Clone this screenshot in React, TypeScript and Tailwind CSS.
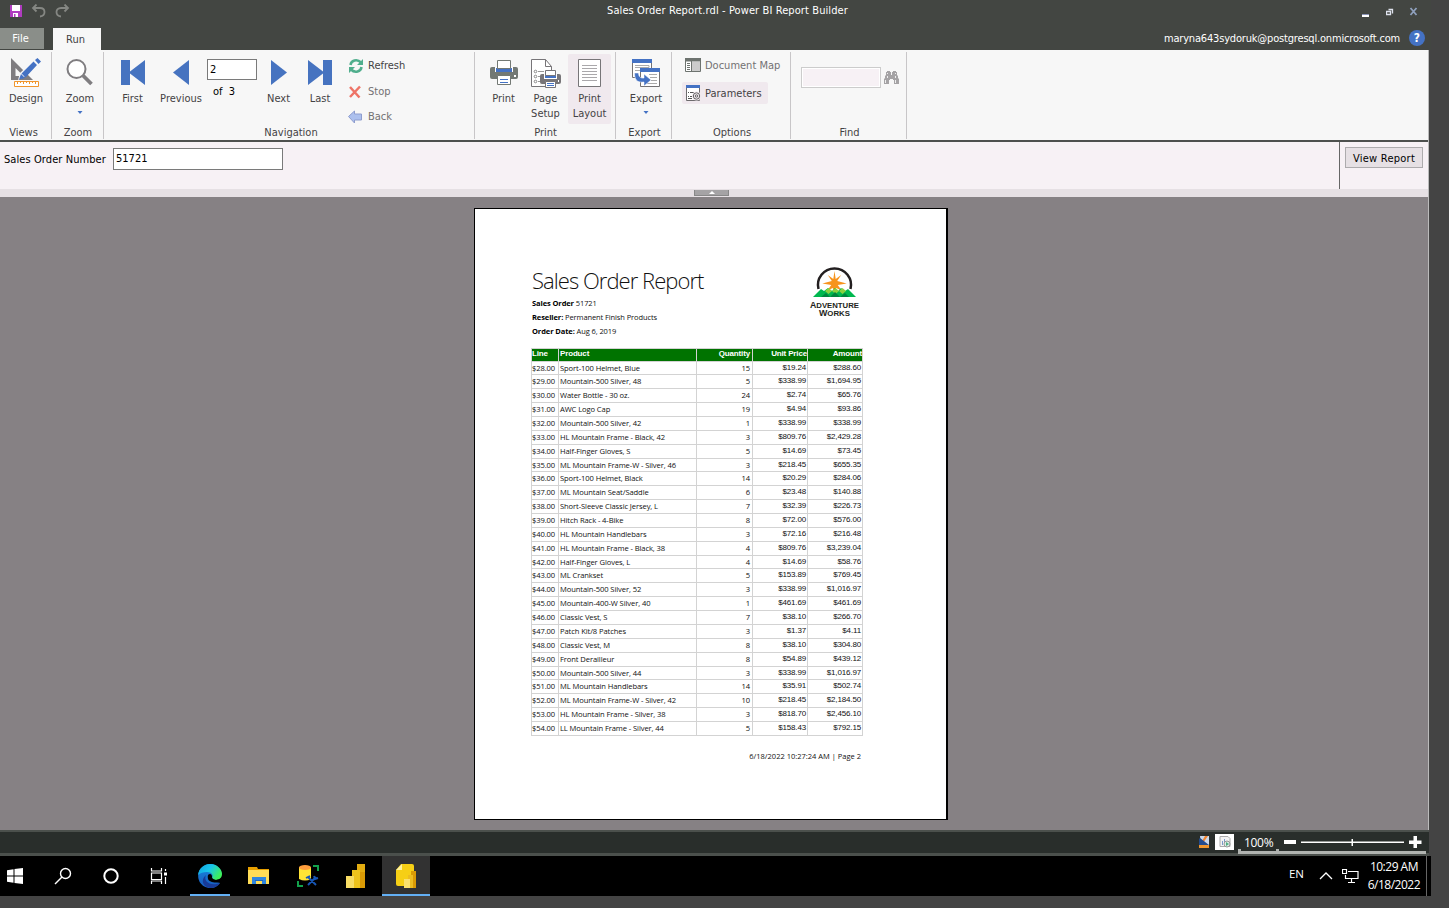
import React from "react";

const ui = "font-['DejaVu_Sans_Condensed','DejaVu_Sans',sans-serif] [font-stretch:condensed]";
const segoe = "font-['Open_Sans','Noto_Sans',sans-serif] [font-stretch:normal]";
const arial = "font-['Liberation_Sans',Arial,sans-serif] [font-stretch:normal]";

const rows: [string, string, string, string, string][] = [
  ["$28.00", "Sport-100 Helmet, Blue", "15", "$19.24", "$288.60"],
  ["$29.00", "Mountain-500 Silver, 48", "5", "$338.99", "$1,694.95"],
  ["$30.00", "Water Bottle - 30 oz.", "24", "$2.74", "$65.76"],
  ["$31.00", "AWC Logo Cap", "19", "$4.94", "$93.86"],
  ["$32.00", "Mountain-500 Silver, 42", "1", "$338.99", "$338.99"],
  ["$33.00", "HL Mountain Frame - Black, 42", "3", "$809.76", "$2,429.28"],
  ["$34.00", "Half-Finger Gloves, S", "5", "$14.69", "$73.45"],
  ["$35.00", "ML Mountain Frame-W - Silver, 46", "3", "$218.45", "$655.35"],
  ["$36.00", "Sport-100 Helmet, Black", "14", "$20.29", "$284.06"],
  ["$37.00", "ML Mountain Seat/Saddle", "6", "$23.48", "$140.88"],
  ["$38.00", "Short-Sleeve Classic Jersey, L", "7", "$32.39", "$226.73"],
  ["$39.00", "Hitch Rack - 4-Bike", "8", "$72.00", "$576.00"],
  ["$40.00", "HL Mountain Handlebars", "3", "$72.16", "$216.48"],
  ["$41.00", "HL Mountain Frame - Black, 38", "4", "$809.76", "$3,239.04"],
  ["$42.00", "Half-Finger Gloves, L", "4", "$14.69", "$58.76"],
  ["$43.00", "ML Crankset", "5", "$153.89", "$769.45"],
  ["$44.00", "Mountain-500 Silver, 52", "3", "$338.99", "$1,016.97"],
  ["$45.00", "Mountain-400-W Silver, 40", "1", "$461.69", "$461.69"],
  ["$46.00", "Classic Vest, S", "7", "$38.10", "$266.70"],
  ["$47.00", "Patch Kit/8 Patches", "3", "$1.37", "$4.11"],
  ["$48.00", "Classic Vest, M", "8", "$38.10", "$304.80"],
  ["$49.00", "Front Derailleur", "8", "$54.89", "$439.12"],
  ["$50.00", "Mountain-500 Silver, 44", "3", "$338.99", "$1,016.97"],
  ["$51.00", "ML Mountain Handlebars", "14", "$35.91", "$502.74"],
  ["$52.00", "ML Mountain Frame-W - Silver, 42", "10", "$218.45", "$2,184.50"],
  ["$53.00", "HL Mountain Frame - Silver, 38", "3", "$818.70", "$2,456.10"],
  ["$54.00", "LL Mountain Frame - Silver, 44", "5", "$158.43", "$792.15"],
];

function Group({ width, label, labelPad = "", children }: { width: string; label: string; labelPad?: string; children: React.ReactNode }) {
  return (
    <div className={`mt-[2px] flex h-[87px] shrink-0 flex-col border-r border-[#c8c6c8] ${width}`}>
      <div className="flex h-[72px] shrink-0">{children}</div>
      <div className={`h-[15px] text-center leading-[17px] ${labelPad}`}>{label}</div>
    </div>
  );
}

function BigButton({ width, lines, arrow, active, children }: { width: string; lines: string[]; arrow?: boolean; active?: boolean; children: React.ReactNode }) {
  return (
    <div className={`mt-[2px] flex h-[70px] shrink-0 flex-col items-center rounded-[2px] pt-[3px] ${width} ${active ? "bg-[#f0e9ee]" : ""}`}>
      <div className="h-[34px]">{children}</div>
      {lines.map((l) => (
        <div key={l} className="whitespace-nowrap leading-[15px]">{l}</div>
      ))}
      {arrow && (
        <svg className="mt-[5px]" width="6" height="4" viewBox="0 0 6 4"><path d="M.5 0h5L3 3z" fill="#4472c4" /></svg>
      )}
    </div>
  );
}

const DesignIcon = () => (
  <svg width="32" height="32" viewBox="0 0 32 32">
    <path d="M1 1v22h22zM5.500 11v8h8z" fill="#7f7d80" fillRule="evenodd" />
    <path d="M8 23l2-7L24 3l5 4-15 13z" fill="#f7f7f7" />
    <path d="M9 22.500l2-5.500 4 4zM11.500 16.500L23.500 4.500l3.500 3.500L15.500 20.500zM25 3L27.500 1l3.500 3.500L28.500 7z" fill="#4472c4" />
    <path d="M4.500 24.500h24v5h-24z" fill="#fff" stroke="#f0962d" />
    <path d="M7.500 24v3M10.500 24v2M13.500 24v3M16.500 24v2M19.500 24v3M22.500 24v2M25.500 24v3" stroke="#f0962d" />
  </svg>
);

const ZoomIcon = () => (
  <svg width="30" height="32" viewBox="0 0 30 32">
    <circle cx="11.500" cy="12" r="9" fill="#fff" stroke="#7f7d80" strokeWidth="2" />
    <path d="M18 18.500l8.500 8.500" stroke="#7f7d80" strokeWidth="3.800" />
  </svg>
);

const Nav = ({ d, w }: { d: string; w: number }) => (
  <svg width={w} height="32" viewBox={`0 0 ${w} 32`}><path d={d} fill="#4673c0" /></svg>
);

const PrintIcon = () => (
  <svg width="30" height="32" viewBox="0 0 30 32">
    <path d="M1 12q0-2 2-2h24q2 0 2 2v8q0 2-2 2H3q-2 0-2-2z" fill="#737974" />
    <path d="M6 10h18v5H6z" fill="#fff" />
    <path d="M7 11h16v4H7z" fill="#4472c4" />
    <path d="M8.500 3.500h13v8h-13z" fill="#fff" stroke="#737974" />
    <path d="M8.500 18.500h13v9h-13z" fill="#fff" stroke="#737974" />
    <path d="M11 22.500h8M11 25.500h8" stroke="#4472c4" />
    <path d="M25 18h2v2h-2z" fill="#fff" />
  </svg>
);

const PageSetupIcon = () => (
  <svg className="ml-px" width="30" height="32" viewBox="0 0 30 32">
    <path d="M.5 2.500h14l6 7v20H.5z" fill="#fff" stroke="#777578" />
    <path d="M14.500 2.500v7h6" fill="none" stroke="#777578" />
    <circle cx="4.500" cy="14.500" r="1.300" fill="none" stroke="#888" /><circle cx="4.500" cy="19.500" r="1.300" fill="none" stroke="#888" /><circle cx="4.500" cy="24.500" r="1.300" fill="none" stroke="#888" />
    <path d="M7 14.500h6M7 19.500h2M7 24.500h2" stroke="#999" />
    <path d="M9 17h5v-4h12v4h4v12H9z" fill="#f7f7f7" />
    <path d="M9 19q0-2 2-2h17q2 0 2 2v6q0 2-2 2H11q-2 0-2-2z" fill="#777578" />
    <path d="M13 17h13v5H13z" fill="#fff" />
    <path d="M14 18h11v3H14z" fill="#4472c4" />
    <path d="M14.500 13.500h10v5h-10zM14.500 24.500h10v6h-10z" fill="#fff" stroke="#777578" />
    <path d="M16 26.500h7M16 28.500h7" stroke="#4472c4" /><path d="M27 23h1v2h-1z" fill="#fff" />
  </svg>
);

const LayoutIcon = () => (
  <svg width="24" height="32" viewBox="0 0 24 32">
    <path d="M.5 2.500h22v27H.5z" fill="#fff" stroke="#777578" />
    <path d="M4 8.500h15M4 11.500h15M4 14.500h15M4 17.500h15M4 20.500h15M4 23.500h15" stroke="#aaa8ab" />
  </svg>
);

const ExportIcon = () => (
  <svg width="30" height="32" viewBox="0 0 30 32">
    <path d="M1.500 2.500h19v18h-19z" fill="#fff" stroke="#737173" />
    <path d="M1 2h20v4H1z" fill="#4472c4" />
    <path d="M4 8.500h14v2H4M4 13.500h5" fill="none" stroke="#aaa" />
    <path d="M9.500 12.500h19v17h-19z" fill="#fff" stroke="#737173" />
    <path d="M9 11h20v4H9z" fill="#4472c4" />
    <path d="M18 17.500h8M19 20.500h7M20 23.500h6M16 26.500h10" stroke="#aaa" />
    <path d="M3.500 16c0 9 5 9.500 9.500 9v4l7-6-7-6v4c-3 .5-5.500-1-5.500-5z" fill="#4472c4" stroke="#fff" strokeWidth=".5" />
  </svg>
);

const Ribbon = () => (
  <div className="flex h-[90px] bg-[#f7f7f7] text-[#444244]">
    <Group width="w-[52px]" label="Views" labelPad="pr-[4px]">
      <BigButton width="w-[52px]" lines={["Design"]}><DesignIcon /></BigButton>
    </Group>
    <Group width="w-[52px]" label="Zoom" labelPad="pl-[1px]">
      <BigButton width="w-[56px]" lines={["Zoom"]} arrow><ZoomIcon /></BigButton>
    </Group>
    <Group width="w-[371px]" label="Navigation" labelPad="pl-[4px]">
      <div className="ml-[6px] flex">
        <BigButton width="w-[45px]" lines={["First"]}><Nav w={24} d="M0 3h9v11.500L24 3v25L9 16.500V28H0z" /></BigButton>
        <BigButton width="w-[52px]" lines={["Previous"]}><Nav w={16} d="M16 3v25L0 15.500z" /></BigButton>
        <div className="w-[50px] pt-[7px] text-black">
          <div className="h-[21px] border border-[#7a7a7a] bg-white pl-[2px] leading-[19px]">2</div>
          <div className="pl-[6px] pt-[4px] leading-[16px] whitespace-pre">of  3</div>
        </div>
        <BigButton width="w-[43px]" lines={["Next"]}><Nav w={16} d="M0 3v25l16-12.500z" /></BigButton>
        <BigButton width="w-[40px]" lines={["Last"]}><Nav w={24} d="M0 3l15 11.500V3h9v25h-9V16.500L0 28z" /></BigButton>
      </div>
      <div className="ml-[8px] flex flex-col">
        <div className="flex h-[27px] shrink-0 items-center gap-[4px]">
          <svg width="16" height="16" viewBox="0 0 16 16"><path d="M2.500 7C3 2.500 9 .5 13 4.500M13.500 9C13 13.500 7 15.500 3 11.500" fill="none" stroke="#50ae8d" strokeWidth="2.500" /><path d="M15 1v6H9zM1 15V9h6z" fill="#50ae8d" /></svg>
          <span className="pt-px">Refresh</span>
        </div>
        <div className="flex h-[25px] shrink-0 items-center gap-[4px] text-[#737173]">
          <svg width="16" height="16" viewBox="0 0 16 16"><path d="M2 3l9.500 10.500M12 2.500L2 13" stroke="#ee7467" strokeWidth="2.500" /></svg>
          <span className="pt-px">Stop</span>
        </div>
        <div className="flex h-[25px] shrink-0 items-center gap-[4px] text-[#737173]">
          <svg className="-mt-[2px]" width="16" height="16" viewBox="0 0 16 16"><path d="M.5 8.500l6-5.500v3h7v6h-7v3z" fill="#acc0ee" stroke="#8e9dce" /></svg>
          <span className="pt-px">Back</span>
        </div>
      </div>
    </Group>
    <Group width="w-[141px]" label="Print" labelPad="pl-[1px]">
      <div className="ml-[8px] flex">
        <BigButton width="w-[41px]" lines={["Print"]}><PrintIcon /></BigButton>
        <BigButton width="w-[43px]" lines={["Page", "Setup"]}><PageSetupIcon /></BigButton>
        <div className="w-px" />
        <BigButton width="w-[43px]" lines={["Print", "Layout"]} active><LayoutIcon /></BigButton>
      </div>
    </Group>
    <Group width="w-[56px]" label="Export" labelPad="pl-[2px]">
      <BigButton width="w-[60px]" lines={["Export"]} arrow><ExportIcon /></BigButton>
    </Group>
    <Group width="w-[119px]" label="Options" labelPad="pl-[2px]">
      <div className="ml-[10px] flex flex-col pt-[3px]">
        <div className="flex h-[20px] items-center gap-[4px] pl-[3px] whitespace-nowrap text-[#737173]">
          <svg width="16" height="14" viewBox="0 0 16 14"><path d="M.5.500h15v13H.5z" fill="#fff" stroke="#6d736f" /><path d="M0 0h16v3.500H0z" fill="#6d736f" /><path d="M7 4h8v9H7z" fill="#ccc" /><path d="M6.500 3v10M2 5.500h3M2 7.500h3M2 9.500h3M2 11.500h3" stroke="#6d736f" /></svg>
          <span className="pt-[2px]">Document Map</span>
        </div>
        <div className="mt-[7px] flex h-[22px] w-[86px] items-center gap-[4px] rounded-[2px] bg-[#f0e9ee] pl-[4px]">
          <svg width="15" height="16" viewBox="0 0 15 16"><path d="M.5.500h13v15H.5z" fill="#fff" stroke="#6d6b6d" /><path d="M0 0h14v3H0z" fill="#4472c4" /><path d="M2 7.500h1M4 7.500h4M2 11.500h1M4 11.500h2M2 13.500h4" stroke="#555" /><circle cx="10.500" cy="11" r="4.500" fill="#f0e9ee" /><circle cx="10.500" cy="11" r="3.200" fill="none" stroke="#666" /><circle cx="10.500" cy="11" r="1.200" fill="none" stroke="#666" /></svg>
          <span className="pt-[2px]">Parameters</span>
        </div>
      </div>
    </Group>
    <Group width="w-[116px]" label="Find" labelPad="pl-[2px]">
      <div className="flex items-start gap-[3px] pl-[10px] pt-[15px]">
        <div className="h-[21px] w-[80px] border border-[#ccc] bg-[#f7f1f5] shadow-[inset_0_0_0_1px_#fff]" />
        <svg className="mt-[4px]" width="15" height="13" viewBox="0 0 15 13"><path d="M3 0h3v1h1v3h1V1h1V0h3v1h1v3l1 1v2l1 1v5h-5V9H9V8H6v1H5v4H0V8l1-1V5l1-1V1h1z" fill="#a5a3a5" /><path d="M1.500 9v3M3.500 2v1M3.500 5v2M11.500 2v1M11.500 5v2M11.500 9v3" stroke="#eee" /></svg>
      </div>
    </Group>
  </div>
);

const Logo = () => (
  <svg className="mr-[2px]" width="52" height="54" viewBox="0 0 52 54">
    <path d="M9.500 23A16.500 16.500 0 1 1 41.500 23" fill="none" stroke="#231f20" strokeWidth="2.500" />
    <path d="M25.500 5l1.200 8 5.500-4-4 6 9.500 2.500-9 1.500 4 5.500-5.500-2.500-1.700 4-1.700-4-5.500 2.500 4-5.500-9-1.500 9.500-2.500-4-6 5.500 4z" fill="#f7941d" />
    <path d="M4 31l8-8 3 2 4-3 4 3 3-3 3 3 3-3 4 3 3-2 8 8z" fill="#00b84f" />
    <path d="M16 25l3.500-3L23 25l-3.500 3zM23 25l3.500-3L30 25l-3.500 3zM30 25l3.500-3L37 25l-3.500 3z" fill="#8bd13f" />
    <path d="M12 31l5-4 4 4zM21 31l5-5 5 5zM31 31l5-4 4 4z" fill="#00853e" />
    <g fill="#231f20" fontFamily="Liberation Sans, sans-serif" fontWeight="700" style={{ fontStretch: "normal" }}>
      <text x="1" y="41.500" fontSize="8.800" textLength="49" lengthAdjust="spacingAndGlyphs">A<tspan fontSize="7.800">DVENTURE</tspan></text>
      <text x="10" y="49.500" fontSize="8.800" textLength="31" lengthAdjust="spacingAndGlyphs">W<tspan fontSize="7.800">ORKS</tspan></text>
    </g>
  </svg>
);

const Report = () => (
  <div className="ml-[474px] h-[612px] w-[474px] border border-r-2 border-black bg-white pl-[56px] text-[#111]">
    <div className="flex h-[139px] w-[332px] justify-between pt-[57px]">
      <div className={`pl-px ${segoe}`}>
        <div className="h-[30px] whitespace-nowrap text-[22px] leading-[29px] font-light tracking-[-0.95px]">Sales Order Report</div>
        <div className="text-[7.500px] leading-[14px] tracking-[-0.1px] whitespace-nowrap">
          <div><b className="text-black">Sales Order</b> 51721</div>
          <div><b className="text-black">Reseller:</b> Permanent Finish Products</div>
          <div><b className="text-black">Order Date:</b> Aug 6, 2019</div>
        </div>
      </div>
      <Logo />
    </div>
    <div className="w-[332px] border-t border-l border-[#d3d3d3]">
      <div className={`flex h-[12.600px] border-b border-[#d3d3d3] bg-[#007300] text-[8px] leading-[9px] font-bold tracking-[-0.15px] text-white ${arial}`}>
        <div className="w-[27px] border-r border-[#d3d3d3]">Line</div>
        <div className="w-[138px] border-r border-[#d3d3d3] pl-px">Product</div>
        <div className="w-[56px] border-r border-[#d3d3d3] pr-[2px] text-right">Quantity</div>
        <div className="w-[55px] border-r border-[#d3d3d3] text-right">Unit Price</div>
        <div className="w-[55px] border-r border-[#d3d3d3] text-right">Amount</div>
      </div>
      {rows.map((r) => (
        <div key={r[0]} className={`flex h-[13.860px] border-b border-[#d3d3d3] text-[7.600px] leading-[13.400px] whitespace-nowrap tracking-[-0.1px] ${segoe}`}>
          <div className="w-[27px] border-r border-[#d3d3d3]">{r[0]}</div>
          <div className="w-[138px] border-r border-[#d3d3d3] pl-px">{r[1]}</div>
          <div className="w-[56px] border-r border-[#d3d3d3] pr-[2px] text-right">{r[2]}</div>
          <div className={`w-[55px] border-r border-[#d3d3d3] pr-px text-right text-[8px] leading-[11px] tracking-[-0.15px] ${arial}`}>{r[3]}</div>
          <div className={`w-[55px] border-r border-[#d3d3d3] pr-px text-right text-[8px] leading-[11px] tracking-[-0.15px] ${arial}`}>{r[4]}</div>
        </div>
      ))}
    </div>
    <div className={`w-[330px] pt-[13px] text-right text-[7.500px] leading-[14px] ${segoe}`}>6/18/2022 10:27:24 AM | Page 2</div>
  </div>
);

const StatusBar = () => (
  <div className="flex h-[26px] w-[1429px] justify-end border-t-2 border-b-[3px] border-[#4b504c] bg-[#292e2b] pr-[3px] text-[12px] text-white">
    <svg className="mt-[4px]" width="14" height="14" viewBox="0 0 14 14"><path d="M2 0h9v10H3z" fill="#c9d8ec" /><path d="M7 0h3L5 7H3z" fill="#f08632" /><path d="M1 3l1-1 9 7v1H1z" fill="#234b8d" /><path d="M1 9h10v3H1z" fill="#f0962d" /></svg>
    <div className="ml-[3px] mt-[2px] flex h-[16px] w-[19px] items-center justify-center bg-white">
      <svg width="12" height="12" viewBox="0 0 12 12"><path d="M1 .5h8l2 2v8H1z" fill="#f3f3f3" stroke="#aaa" /><path d="M3.500 5v4M5.500 3v5" stroke="#7b99cb" /><circle cx="8" cy="8" r="3" fill="#dcece4" stroke="#999" /><path d="M7 6l3 2-3 2z" fill="#4eae82" /></svg>
    </div>
    <div className="ml-[4px] flex h-[22px] w-[188px] flex-col">
      <div className="flex h-[17px]">
        <span className={`ml-[6px] w-[40px] leading-[22px] tracking-[-0.3px] ${segoe}`}>100%</span>
        <svg width="138" height="17" viewBox="0 0 138 17"><path d="M0 8h12v4H0zM17 9.500h103v1.500H17zM67.500 7h1.500v7h-1.500zM125 8.500h4.500V4h3.500v4.500h4.500V12H133v4h-3.500v-4H125z" fill="#fff" /></svg>
      </div>
      <svg width="188" height="5" viewBox="0 0 188 5"><path d="M0 0h3v2h35V0h3v2h147v3H0z" fill="#b0b3b0" /></svg>
    </div>
  </div>
);

const Cell = ({ className, children }: { className: string; children: React.ReactNode }) => (
  <div className={`flex h-[40px] items-center justify-center ${className}`}>{children}</div>
);

const Taskbar = () => (
  <div className="flex h-[40px] w-[1431px] bg-black text-white">
    <Cell className="w-[30px]"><svg width="16" height="16" viewBox="0 0 16 16"><path d="M0 2.200l6.500-.9v6.200H0zM7.500 1.100L16 0v7.500H7.500zM0 8.500h6.500v6.200L0 13.800zM7.500 8.500H16V16l-8.500-1.100z" fill="#fff" /></svg></Cell>
    <Cell className="ml-[9px] w-[48px]"><svg width="18" height="18" viewBox="0 0 18 18"><circle cx="11.500" cy="6.500" r="5" fill="none" stroke="#fff" strokeWidth="1.400" /><path d="M8 10l-7 7" stroke="#fff" strokeWidth="1.400" /></svg></Cell>
    <Cell className="w-[48px]"><svg width="18" height="18" viewBox="0 0 18 18"><circle cx="9" cy="9" r="6.700" fill="none" stroke="#fff" strokeWidth="2" /></svg></Cell>
    <Cell className="w-[48px]"><svg width="18" height="16" viewBox="0 0 18 16"><path d="M1.500 0v3h10V0M1.500 5h10v6.500h-10zM1.500 16v-3h10v3M15.500 1v2M15.500 9v7" fill="none" stroke="#fff" strokeWidth="1.200" /><path d="M14 4.500h3v3h-3z" fill="#fff" /></svg></Cell>
    <Cell className="ml-[7px] w-[40px] border-b-2 border-[#63b0f5] pt-[1px]">
      <svg width="24" height="24" viewBox="0 0 24 24">
        <defs>
          <linearGradient id="edgeTop" x1="0" y1="0" x2="1" y2=".5"><stop offset="0" stopColor="#129edb" /><stop offset=".5" stopColor="#17c4ed" /><stop offset="1" stopColor="#3df05b" /></linearGradient>
          <linearGradient id="edgeSide" x1="0" y1="0" x2="0" y2="1"><stop offset="0" stopColor="#188bdf" /><stop offset="1" stopColor="#1758bd" /></linearGradient>
        </defs>
        <path d="M24 10A12 12 0 1 0 22 19L14 16z" fill="url(#edgeSide)" />
        <path d="M8 11c-3 6 4 12 14 8-2 3.500-6 5-10 5C5 23 2 16 8 11z" fill="#183b98" />
        <path d="M0 11C1 4 6 0 12 0c7 0 12 5 12 10 0 7-9 7-10 4 2-3-.5-6-5-6-4 0-7 1-9 3z" fill="url(#edgeTop)" />
        <path d="M10.500 10.500c2-1.500 4 .5 3.500 3 1 3 6 3 9 1l-1 3.500c-5 1.500-11 0-12-3-.3-2-.5-3.500.5-4.500z" fill="#000" />
      </svg>
    </Cell>
    <Cell className="ml-[5px] w-[48px]"><svg width="22" height="18" viewBox="0 0 22 18"><path d="M0 0h9l1 2h11v15H0z" fill="#e8a000" /><path d="M0 3h21v14H0z" fill="#ffdd57" /><path d="M4 17v-7h14v7h-4v-4H8v4z" fill="#2f86df" /><path d="M7 13h8v1H7z" fill="#1a65c0" /></svg></Cell>
    <Cell className="ml-[1px] w-[48px]"><svg width="22" height="22" viewBox="0 0 22 22"><path d="M2 2h12v12q-6 3-12 0z" fill="#ffe435" /><ellipse cx="8" cy="2.500" rx="6" ry="2.500" fill="#ff9e3d" /><path d="M16 0h6v6h-2V2h-4zM0 16h2v4h4v2H0z" fill="#12a14b" /><path d="M11 20l8-8M11 12l8 8M9 13l4-2M17 11l1 3 3-1" fill="none" stroke="#1756b5" strokeWidth="1.900" /></svg></Cell>
    <Cell className="w-[48px]"><svg width="20" height="24" viewBox="0 0 20 24"><path d="M11 0h8v24h-8z" fill="#d99a05" /><path d="M11 0h8v8h-8z" fill="#e2ac10" /><path d="M6 6h8v18H6z" fill="#eec31c" /><path d="M0 12h8v12H0z" fill="#f8dd65" /></svg></Cell>
    <Cell className="ml-[2px] w-[48px] border-b-2 border-[#63b0f5] bg-[#323232] pt-[2px]"><svg width="20" height="24" viewBox="0 0 20 24"><path d="M5 0h11q2 0 2 2v20H2q-2 0-2-2V6z" fill="#f6cf15" /><path d="M6 0v6H0z" fill="#fff2a0" /><path d="M15 7h5v17h-5z" fill="#d99a05" /><path d="M12 11h5v13h-5z" fill="#edbd21" /><path d="M8 15h6v9H8z" fill="#fae16e" /></svg></Cell>
    <div className={`flex flex-1 items-center justify-end ${segoe} text-[12px]`}>
      <span className="mr-[15px] mb-[4px] text-[11.500px]">EN</span>
      <svg className="mr-[9px]" width="14" height="8" viewBox="0 0 14 8"><path d="M1 7l6-6 6 6" fill="none" stroke="#fff" strokeWidth="1.300" /></svg>
      <svg className="mr-[6px]" width="17" height="15" viewBox="0 0 17 15"><path d="M6 2.500h10v7H3.500V6M9.500 10v3M6 13.500h7M.5.500h4v4h-4z" fill="none" stroke="#fff" strokeWidth="1.200" /></svg>
      <div className="mr-[6px] w-[55px] text-right leading-[18px] whitespace-nowrap tracking-[-0.5px]"><div className="pr-[2px]">10:29 AM</div><div>6/18/2022</div></div>
      <div className="mr-[4px] h-[40px] w-px bg-[#666]" />
    </div>
  </div>
);

export default function App() {
  return (
    <div className={`h-[908px] w-[1449px] overflow-hidden bg-[#444] text-[11px] ${ui}`}>
      <header className="flex h-[50px] w-[1431px] flex-col bg-[#434642] text-white">
        <div className="flex h-[28px]">
          <div className="flex w-[607px] gap-[9px] pl-[10px] pt-[4px]">
            <svg className="mt-px" width="12" height="12" viewBox="0 0 12 12"><path d="M0 0h12v12H0z" fill="#b03cc0" /><path d="M2 0h8v6H2zM3 8h5v4H3z" fill="#fff" /><path d="M4 9h1.500v3H4z" fill="#b03cc0" /></svg>
            <svg width="16" height="14" viewBox="0 0 16 14"><path d="M5.500.500L2 4l3.500 3.500M2 4h7c6 0 6 8 0 8.500" fill="none" stroke="#858783" strokeWidth="1.800" /></svg>
            <svg className="-ml-px" width="16" height="14" viewBox="0 0 16 14"><path d="M9.500.500L13 4 9.500 7.500M13 4H6c-6 0-6 8 0 8.500" fill="none" stroke="#858783" strokeWidth="1.800" /></svg>
          </div>
          <div className="flex-1 leading-[21px] tracking-[0.1px]">Sales Order Report.rdl - Power BI Report Builder</div>
          <div className="flex gap-[17px] pt-[7px] pr-[12px]">
            <svg className="mr-[-1px]" width="9" height="10" viewBox="0 0 9 10"><path d="M1 7h7v3H1z" fill="#fff" /><path d="M1 7h7v1H1z" fill="#8b94b5" /></svg>
            <svg className="mr-[-2px]" width="8" height="10" viewBox="0 0 8 10"><path d="M2.500 2.500h4v4M.5 4.500h4v3h-4z" fill="none" stroke="#dde1ec" strokeWidth="1.300" /></svg>
            <svg width="10" height="10" viewBox="0 0 10 10"><path d="M1.500 1l6 7M7.500 1l-6 7" stroke="#8fa0bd" strokeWidth="1.800" /></svg>
          </div>
        </div>
        <div className="flex h-[22px]">
          <div className="h-[21px] w-[44px] bg-[#8a8e89] pr-[3px] text-center leading-[21px]">File</div>
          <div className="ml-[9px] w-[48px] bg-[#f7f7f7] pr-[3px] text-center leading-[23px] text-[#444244]">Run</div>
          <div className="flex flex-1 items-center justify-end gap-[9px] pr-[6px]">
            <span className="pt-px tracking-[-0.18px]">maryna643sydoruk@postgresql.onmicrosoft.com</span>
            <div className="-mt-[3px] flex h-[16px] w-[16px] items-center justify-center rounded-full bg-[#4472c4] text-[12px] font-bold">?</div>
          </div>
        </div>
      </header>
      <main className="w-[1429px] border-r border-[#bbb]">
        <Ribbon />
        <section className="flex h-[49px] border-t-2 border-[#4e504e] bg-[#f7f1f5] text-black">
          <label className="w-[113px] pt-[10px] pl-[4px] leading-[16px] tracking-[0.08px] whitespace-nowrap">Sales Order Number</label>
          <div className="mt-[6px] h-[22px] w-[170px] border border-[#7a7a7a] bg-white pl-[2px] leading-[19px]">51721</div>
          <div className="ml-auto w-[89px] border-l border-[#666] pt-[5px] pl-[5px]">
            <div className="h-[21px] w-[78px] border border-[#adabad] bg-[#e6e0e4] text-center leading-[21px] tracking-[0.25px]">View Report</div>
          </div>
        </section>
        <div className="flex h-[8px] bg-[#e6e0e4] pt-px">
          <div className="ml-[694px] flex h-[6px] w-[35px] items-center justify-center border-x border-b border-[#888] bg-[#a5a3a5]"><svg width="6" height="3" viewBox="0 0 6 3"><path d="M0 3l3-3 3 3z" fill="#fff" /></svg></div>
        </div>
        <section className="h-[633px] bg-[#868184] pt-[11px]"><Report /></section>
      </main>
      <StatusBar />
      <Taskbar />
    </div>
  );
}
